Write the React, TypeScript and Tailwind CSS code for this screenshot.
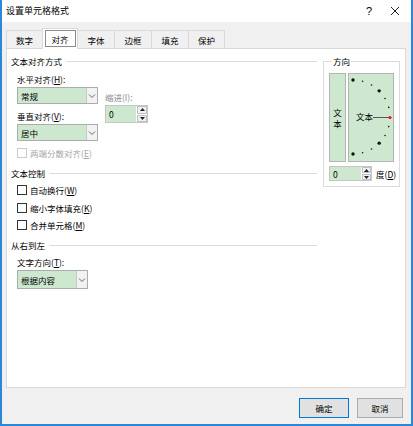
import React from "react";

const font = "font-['Noto_Sans_CJK_SC','Liberation_Sans',sans-serif]";

function Chevron() {
  return (
    <svg width="8" height="8" viewBox="0 0 8 8">
      <polyline points="1,2.5 4,5.5 7,2.5" fill="none" stroke="#5a5a5a" strokeWidth="0.9" />
    </svg>
  );
}

function Select({ value, className }: { value: string; className: string }) {
  return (
    <div className={`flex border border-[#acacac] bg-[#cde8cf] ${className}`}>
      <span className="flex flex-1 items-center pl-[3px]">{value}</span>
      <div className="flex w-[11px] items-center justify-center border-l border-[#c8c8c8] bg-[#f2f2f2]">
        <Chevron />
      </div>
    </div>
  );
}

function Spinner({ className, inputWidth }: { className: string; inputWidth: string }) {
  return (
    <div className={`flex border border-[#c6c6c6] bg-white ${className}`}>
      <div className={`flex items-center bg-[#cde8cf] pl-[3px] ${inputWidth}`}>0</div>
      <div className="ml-[1px] flex w-[10px] flex-col gap-px">
        <div className="flex flex-1 items-center justify-center border border-[#c0c0c0] bg-[#f0f0f0]">
          <svg width="5" height="3" viewBox="0 0 5 3">
            <polygon points="0,3 2.5,0 5,3" fill="#222" />
          </svg>
        </div>
        <div className="flex flex-1 items-center justify-center border border-[#c0c0c0] bg-[#f0f0f0]">
          <svg width="5" height="3" viewBox="0 0 5 3">
            <polygon points="0,0 2.5,3 5,0" fill="#222" />
          </svg>
        </div>
      </div>
    </div>
  );
}

function Heading({ text }: { text: string }) {
  return (
    <div className="flex h-[14px] items-center gap-[4px]">
      <span>{text}</span>
      <div className="h-px flex-1 bg-[#dcdcdc]" />
    </div>
  );
}

function Check({ label, accel, disabled }: { label: string; accel: string; disabled?: boolean }) {
  return (
    <div className={`flex h-[12px] items-center gap-[3px] pl-[6px] ${disabled ? "text-[#a6a6a6]" : "text-black"}`}>
      <div className={`h-[10px] w-[10px] border bg-white ${disabled ? "border-[#cccccc]" : "border-[#333333]"}`} />
      <span>
        {label}(<u>{accel}</u>)
      </span>
    </div>
  );
}

function Dial() {
  const cx = 4;
  const cy = 43;
  const r = 37;
  const dots = [];
  for (let a = 90; a >= -90; a -= 15) {
    const rad = (a * Math.PI) / 180;
    const x = cx + r * Math.cos(rad);
    const y = cy - r * Math.sin(rad);
    if (a === 0) continue;
    const big = Math.abs(a) === 90 || Math.abs(a) === 45;
    dots.push(<circle key={a} cx={x} cy={y} r={big ? 1.7 : 0.8} fill="#111" />);
  }
  return (
    <svg width="44" height="87" viewBox="0 0 44 87" className="absolute left-0 top-0">
      {dots}
      <text x="7" y="46" fontSize="8.5" fill="#000" fontFamily="Noto Sans CJK SC, sans-serif">
        文本
      </text>
      <line x1="24" y1="43.5" x2="40" y2="43.5" stroke="#333" strokeWidth="0.8" />
      <circle cx="41" cy="43.5" r="1.6" fill="#e8141e" />
    </svg>
  );
}

const tabs = [
  { name: "数字", w: "w-[37px]" },
  { name: "对齐", w: "w-[36px]" },
  { name: "字体", w: "w-[38px]" },
  { name: "边框", w: "w-[38px]" },
  { name: "填充", w: "w-[38px]" },
  { name: "保护", w: "w-[37px]" },
];

export default function App() {
  return (
    <div className={`flex h-[426px] w-[413px] flex-col border-x-2 border-b-2 border-[#2b88d8] bg-[#f0f0f0] text-[8.5px] leading-[12px] text-black ${font}`}>
      {/* title bar */}
      <div className="flex h-[22px] items-center bg-white pl-[4px]">
        <span className="text-[9px]">设置单元格格式</span>
        <span className="ml-auto mr-[18px] font-['Liberation_Sans',sans-serif] text-[11px]">?</span>
        <svg width="10" height="10" viewBox="0 0 10 10" className="mr-[11px]">
          <path d="M1 1L9 9M9 1L1 9" stroke="#222" strokeWidth="1" />
        </svg>
      </div>

      {/* tabs */}
      <div className="flex h-[26px] items-end pl-[4px]">
        {tabs.map((t, i) =>
          t.name === "对齐" ? (
            <div
              key={t.name}
              className={`relative z-10 -mb-px -ml-px flex h-[21px] items-start justify-center border border-b-0 border-[#d9d9d9] bg-white pt-[1px] ${t.w}`}
            >
              <div className="flex h-[17px] w-[31px] items-center justify-center border border-[#8c8c8c]">{t.name}</div>
            </div>
          ) : (
            <div
              key={t.name}
              className={`flex h-[18px] items-center justify-center border border-b-0 border-[#d9d9d9] bg-[#f0f0f0] ${i > 0 ? "-ml-px" : ""} ${t.w}`}
            >
              {t.name}
            </div>
          ),
        )}
      </div>

      {/* panel */}
      <div className="ml-[4px] flex h-[340px] w-[400px] items-start border border-[#d9d9d9] bg-white pl-[4px]">
        <div className="flex w-[306px] flex-col pt-[5px]">
          <Heading text="文本对齐方式" />
          <div className="mt-[5px] flex items-start pl-[6px]">
            <div className="flex w-[81px] flex-col">
              <div className="h-[12px]">
                水平对齐(<u>H</u>):
              </div>
              <Select value="常规" className="mt-[2px] h-[17px] w-[81px]" />
              <div className="mt-[6px] h-[12px]">
                垂直对齐(<u>V</u>):
              </div>
              <Select value="居中" className="mt-[2px] h-[17px] w-[81px]" />
            </div>
            <div className="ml-[7px] mt-[18px] flex flex-col">
              <div className="h-[12px] text-[#8c8c8c]">缩进(I):</div>
              <Spinner className="mt-[2px] h-[18px] w-[43px]" inputWidth="w-[31px]" />
            </div>
          </div>
          <div className="mt-[6px]">
            <Check label="两端分散对齐" accel="E" disabled />
          </div>
          <div className="mt-[7px]">
            <Heading text="文本控制" />
          </div>
          <div className="mt-[4px]">
            <Check label="自动换行" accel="W" />
          </div>
          <div className="mt-[6px]">
            <Check label="缩小字体填充" accel="K" />
          </div>
          <div className="mt-[5px]">
            <Check label="合并单元格" accel="M" />
          </div>
          <div className="mt-[7px]">
            <Heading text="从右到左" />
          </div>
          <div className="mt-[4px] h-[12px] pl-[6px]">
            文字方向(<u>T</u>):
          </div>
          <div className="mt-[2px] pl-[6px]">
            <Select value="根据内容" className="h-[19px] w-[71px]" />
          </div>
        </div>

        <fieldset className="ml-[6px] mt-[6px] w-[77px] border border-[#dcdcdc] pb-[5px] pl-[5px] pt-[6px]">
          <legend className="ml-[3px] px-[1px] leading-[12px]">方向</legend>
          <div className="flex h-[89px] gap-[2px]">
            <div className="flex w-[17px] flex-col items-center justify-center border border-[#b4b4b4] bg-[#cde8cf] leading-[11px]">
              <span>文</span>
              <span>本</span>
            </div>
            <div className="relative w-[46px] border border-[#b4b4b4] bg-[#cde8cf]">
              <Dial />
            </div>
          </div>
          <div className="mt-[4px] flex items-center">
            <Spinner className="h-[15px] w-[43px]" inputWidth="w-[32px]" />
            <span className="ml-[4px]">
              度(<u>D</u>)
            </span>
          </div>
        </fieldset>
      </div>

      {/* buttons */}
      <div className="flex justify-end gap-[8px] pr-[8px] pt-[10px]">
        <div className="flex h-[20px] w-[50px] items-center justify-center border border-[#0078d7] bg-[#e1e1e1]">确定</div>
        <div className="flex h-[20px] w-[46px] items-center justify-center border border-[#adadad] bg-[#e1e1e1]">取消</div>
      </div>
    </div>
  );
}
